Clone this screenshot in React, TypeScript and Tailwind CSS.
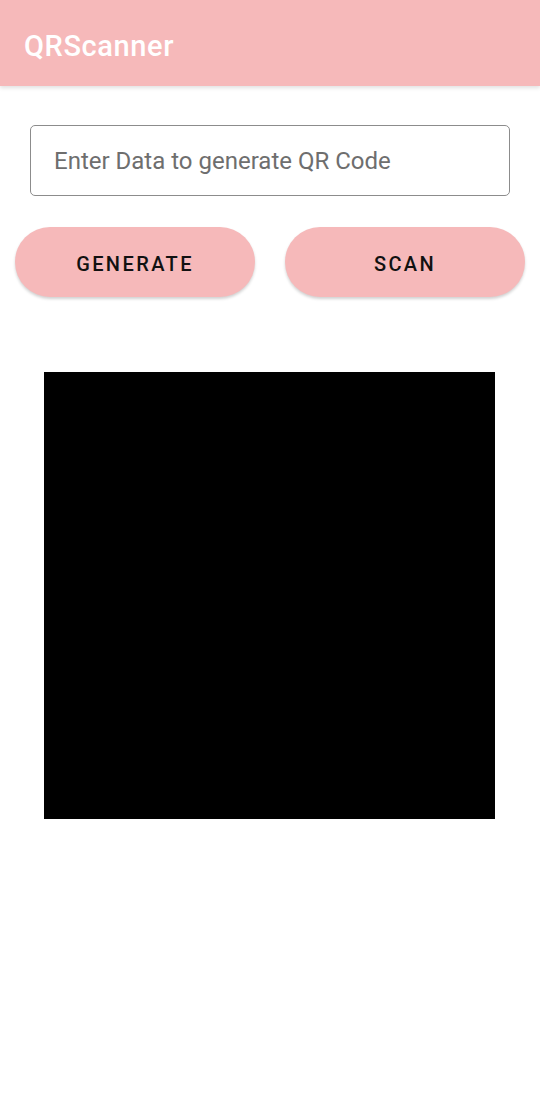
import React, { useState } from "react";

const font = { fontFamily: "Roboto, 'Noto Sans', sans-serif" };

function TopBar({ title }: { title: string }) {
  return (
    <header className="h-[86px] bg-[#f6b9ba] flex items-center px-6 shadow-[0_2px_4px_rgba(0,0,0,0.12)]">
      <h1 className="text-[29px] font-medium text-white leading-none mt-[6px] tracking-[0.6px]">{title}</h1>
    </header>
  );
}

function PillButton({ label, onClick }: { label: string; onClick?: () => void }) {
  return (
    <button
      onClick={onClick}
      className="h-[70px] pt-[3px] rounded-full bg-[#f6b9ba] text-[#111] text-[20px] font-medium tracking-[0.12em] shadow-[0_2px_3px_rgba(0,0,0,0.18)]"
    >
      {label}
    </button>
  );
}

export default function App() {
  const [data, setData] = useState<string>("");

  return (
    <div className="w-[540px] h-[1106px] bg-white" style={font}>
      <TopBar title="QRScanner" />

      <main className="pt-[39px]">
        <div className="px-[30px]">
          <input
            value={data}
            onChange={(e) => setData(e.target.value)}
            placeholder="Enter Data to generate QR Code"
            className="w-[480px] h-[71px] border border-[#8c8c8c] rounded-[5px] px-[23px] text-[24px] text-[#333] placeholder:text-[#6e6e6e] outline-none"
          />
        </div>

        <div className="grid grid-cols-2 gap-[30px] px-[15px] mt-[31px]">
          <PillButton label="GENERATE" />
          <PillButton label="SCAN" />
        </div>

        <div className="flex justify-center mt-[75px] pr-[1px]">
          <div className="w-[451px] h-[447px] bg-black" />
        </div>
      </main>
    </div>
  );
}
